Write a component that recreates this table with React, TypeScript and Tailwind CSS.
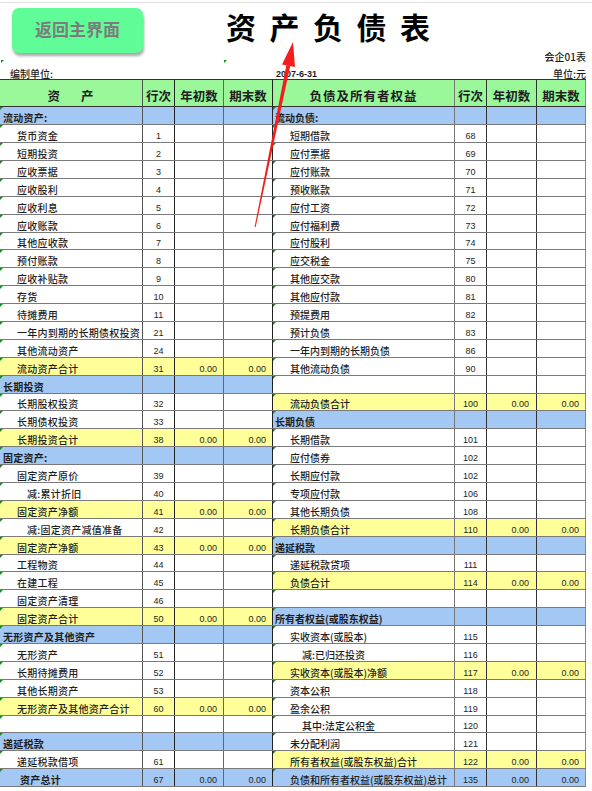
import React from "react";

type T = "section" | "item" | "sub" | "total" | "blank" | "grand" | "grandb";
type Row = [string, string, T];

const left: Row[] = [
  ["流动资产:", "", "section"],
  ["货币资金", "1", "item"],
  ["短期投资", "2", "item"],
  ["应收票据", "3", "item"],
  ["应收股利", "4", "item"],
  ["应收利息", "5", "item"],
  ["应收账款", "6", "item"],
  ["其他应收款", "7", "item"],
  ["预付账款", "8", "item"],
  ["应收补贴款", "9", "item"],
  ["存货", "10", "item"],
  ["待摊费用", "11", "item"],
  ["一年内到期的长期债权投资", "21", "item"],
  ["其他流动资产", "24", "item"],
  ["流动资产合计", "31", "total"],
  ["长期投资", "", "section"],
  ["长期股权投资", "32", "item"],
  ["长期债权投资", "33", "item"],
  ["长期投资合计", "38", "total"],
  ["固定资产:", "", "section"],
  ["固定资产原价", "39", "item"],
  ["减:累计折旧", "40", "sub"],
  ["固定资产净额", "41", "total"],
  ["减:固定资产减值准备", "42", "sub"],
  ["固定资产净额", "43", "total"],
  ["工程物资", "44", "item"],
  ["在建工程", "45", "item"],
  ["固定资产清理", "46", "item"],
  ["固定资产合计", "50", "total"],
  ["无形资产及其他资产", "", "section"],
  ["无形资产", "51", "item"],
  ["长期待摊费用", "52", "item"],
  ["其他长期资产", "53", "item"],
  ["无形资产及其他资产合计", "60", "total"],
  ["", "", "blank"],
  ["递延税款", "", "section"],
  ["递延税款借项", "61", "item"],
  ["资产总计", "67", "grandb"],
];

const right: Row[] = [
  ["流动负债:", "", "section"],
  ["短期借款", "68", "item"],
  ["应付票据", "69", "item"],
  ["应付账款", "70", "item"],
  ["预收账款", "71", "item"],
  ["应付工资", "72", "item"],
  ["应付福利费", "73", "item"],
  ["应付股利", "74", "item"],
  ["应交税金", "75", "item"],
  ["其他应交款", "80", "item"],
  ["其他应付款", "81", "item"],
  ["预提费用", "82", "item"],
  ["预计负债", "83", "item"],
  ["一年内到期的长期负债", "86", "item"],
  ["其他流动负债", "90", "item"],
  ["", "", "blank"],
  ["流动负债合计", "100", "total"],
  ["长期负债", "", "section"],
  ["长期借款", "101", "item"],
  ["应付债券", "102", "item"],
  ["长期应付款", "102", "item"],
  ["专项应付款", "106", "item"],
  ["其他长期负债", "108", "item"],
  ["长期负债合计", "110", "total"],
  ["递延税款", "", "section"],
  ["递延税款贷项", "111", "item"],
  ["负债合计", "114", "total"],
  ["", "", "blank"],
  ["所有者权益(或股东权益)", "", "section"],
  ["实收资本(或股本)", "115", "item"],
  ["减:已归还投资", "116", "sub"],
  ["实收资本(或股本)净额", "117", "total"],
  ["资本公积", "118", "item"],
  ["盈余公积", "119", "item"],
  ["其中:法定公积金", "120", "sub"],
  ["未分配利润", "121", "item"],
  ["所有者权益(或股东权益)合计", "122", "total"],
  ["负债和所有者权益(或股东权益)总计", "135", "grand"],
];

const bgOf = (t: T) =>
  t === "section" || t === "grand" || t === "grandb"
    ? "bg-[#a3c8f3]"
    : t === "total"
    ? "bg-[#ffff99]"
    : "bg-white";

const Mark = () => (
  <span className="absolute left-0 top-0 h-0 w-0 border-t-[3px] border-r-[3px] border-t-[#12901a] border-r-transparent" />
);

function LeftHalf({ r }: { r: Row }) {
  const [l, n, t] = r;
  const bg = bgOf(t);
  const hasVal = t === "total" || t === "grand" || t === "grandb";
  const pl =
    t === "section"
      ? "pl-[3px] font-bold"
      : t === "sub"
      ? "pl-[27px] font-medium"
      : t === "grandb"
      ? "pl-[20px] font-bold"
      : "pl-[17px] font-medium";
  return (
    <div className={`flex h-full ${bg}`}>
      <div className={`relative flex w-[143px] items-end border-r border-[#555] pb-[1px] leading-[10px] text-[10px] tracking-[0.25px] ${pl}`}>
        <Mark />
        <span className="whitespace-nowrap">{l}</span>
      </div>
      <div className="flex w-[32px] items-end justify-center border-r border-[#222] pb-[1px] font-['Liberation_Sans',sans-serif] text-[9px] leading-[10px]">
        {n}
      </div>
      <div className="flex w-[49px] items-end justify-end border-r border-[#666] pr-[6px] pb-[1px] font-['Liberation_Sans',sans-serif] text-[9px] leading-[10px]">
        {hasVal ? "0.00" : ""}
      </div>
      <div className="flex w-[49px] items-end justify-end border-r border-[#222] pr-[6px] pb-[1px] font-['Liberation_Sans',sans-serif] text-[9px] leading-[10px]">
        {hasVal ? "0.00" : ""}
      </div>
    </div>
  );
}

function RightHalf({ r }: { r: Row }) {
  const [l, n, t] = r;
  const bg = bgOf(t);
  const hasVal = t === "total" || t === "grand" || t === "grandb";
  const pl =
    t === "section" ? "pl-[2px] font-bold" : t === "sub" ? "pl-[29px] font-medium" : "pl-[17px] font-medium";
  return (
    <div className={`flex h-full ${bg}`}>
      <div className={`relative flex w-[182px] items-end border-r border-[#777] pb-[1px] leading-[10px] text-[10px] ${pl}`}>
        <Mark />
        <span className="whitespace-nowrap">{l}</span>
      </div>
      <div className="flex w-[32px] items-end justify-center border-r border-[#333] pb-[1px] font-['Liberation_Sans',sans-serif] text-[9px] leading-[10px]">
        {n}
      </div>
      <div className="flex w-[50px] items-end justify-end border-r border-[#333] pr-[7px] pb-[1px] font-['Liberation_Sans',sans-serif] text-[9px] leading-[10px]">
        {hasVal ? "0.00" : ""}
      </div>
      <div className="flex w-[49px] items-end justify-end border-r border-[#888] pr-[6px] pb-[1px] font-['Liberation_Sans',sans-serif] text-[9px] leading-[10px]">
        {hasVal ? "0.00" : ""}
      </div>
    </div>
  );
}

export default function App() {
  return (
    <div className="relative h-[791px] w-[592px] overflow-hidden bg-white font-['Noto_Sans_CJK_SC','Noto_Sans',sans-serif] text-[#1e1e1e]">
      {/* top area */}
      <div className="flex h-[79px] flex-col">
        <div className="h-[3px] border-b border-[#dedede]" />
        <div className="flex flex-1">
          <div className="relative flex w-[143px] flex-col">
            <button className="ml-[12px] mt-[5px] flex h-[45px] w-[131px] items-center justify-center rounded-[7px] bg-[#60fc97] pb-[4px] text-[17px] font-bold text-[#7c7c7c] shadow-[1px_3px_3px_rgba(0,0,0,0.35)]">
              返回主界面
            </button>
            <div className="mt-auto pl-[10px] text-[10px] font-medium leading-[10px]">编制单位:</div>
            <span className="absolute left-[1px] top-[57px] h-0 w-0 border-t-[3px] border-r-[3px] border-t-[#12901a] border-r-transparent" />
          </div>
          <div className="relative flex w-[300px] flex-col">
            <div className="ml-[83px] mt-[8px] whitespace-nowrap text-[30px] font-bold leading-[30px] tracking-[13.5px] text-black">
              资产负债表
            </div>
            <div className="ml-[133px] mt-auto font-['Liberation_Sans',sans-serif] text-[9px] font-bold leading-[10px]">
              2007-6-31
            </div>
            <span className="absolute left-[81px] top-[57px] h-0 w-0 border-t-[3px] border-r-[3px] border-t-[#12901a] border-r-transparent" />
          </div>
          <div className="flex flex-1 flex-col items-end pr-[6px]">
            <div className="mt-auto text-[10px] font-medium leading-[10px]">会企01表</div>
            <div className="mt-[7px] text-[10px] font-medium leading-[10px]">单位:元</div>
          </div>
        </div>
      </div>

      {/* header */}
      <div className="flex h-[28.3px] w-[586px] border-y border-[#333] bg-[#9af79a] text-[12.5px] font-bold leading-[14px] tracking-[1px]">
        <div className="flex w-[143px] items-end justify-center gap-[20px] border-r border-[#555] pb-[3px]">
          <span>资</span>
          <span>产</span>
        </div>
        <div className="flex w-[32px] items-end justify-center border-r border-[#222] pb-[3px] tracking-[0px]">行次</div>
        <div className="flex w-[49px] items-end justify-center border-r border-[#666] pb-[3px] tracking-[0px]">年初数</div>
        <div className="flex w-[49px] items-end justify-center border-r border-[#222] pb-[3px] tracking-[0px]">期末数</div>
        <div className="flex w-[182px] items-end justify-center border-r border-[#777] pb-[3px]">负债及所有者权益</div>
        <div className="flex w-[32px] items-end justify-center border-r border-[#333] pb-[3px] tracking-[0px]">行次</div>
        <div className="flex w-[50px] items-end justify-center border-r border-[#333] pb-[3px] tracking-[0px]">年初数</div>
        <div className="flex w-[49px] items-end justify-center border-r border-[#888] pb-[3px] tracking-[0px]">期末数</div>
      </div>

      {/* rows */}
      <div className="flex w-[586px] flex-col">
        {left.map((r, i) => (
          <div key={i} className="flex h-[17.9px] border-b border-[#7a7a7a]">
            <LeftHalf r={r} />
            <RightHalf r={right[i]} />
          </div>
        ))}
      </div>

      {/* red arrow overlay */}
      <svg className="pointer-events-none absolute left-0 top-0" width="592" height="791" viewBox="0 0 592 791">
        <polygon points="293,42 295,67 282,64.5" fill="#f21d1d" />
        <polygon points="290.2,65.9 286.4,65.1 254.6,227 255.6,227.2" fill="#f21d1d" />
      </svg>
    </div>
  );
}
